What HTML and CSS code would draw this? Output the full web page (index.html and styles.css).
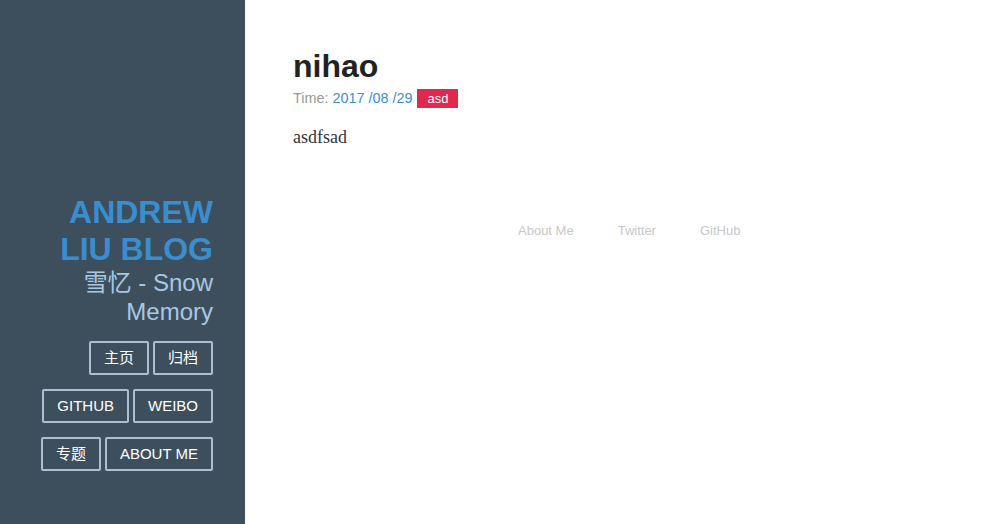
FILE: index.html
```html
<!DOCTYPE html>
<html lang="zh">
<head>
<meta charset="utf-8">
<title>nihao - Andrew Liu Blog</title>
<link rel="stylesheet" href="styles.css">
</head>
<body>
<div class="page">
  <aside class="sidebar">
    <h1 class="site-title">ANDREW LIU BLOG</h1>
    <p class="site-sub">雪忆 - Snow Memory</p>
    <nav class="nav">
      <div class="nav-row"><a class="btn" href="#">主页</a><a class="btn" href="#">归档</a></div>
      <div class="nav-row"><a class="btn" href="#">GITHUB</a><a class="btn" href="#">WEIBO</a></div>
      <div class="nav-row"><a class="btn" href="#">专题</a><a class="btn" href="#">ABOUT ME</a></div>
    </nav>
  </aside>
  <main class="main">
    <article class="post">
      <h2 class="post-title">nihao</h2>
      <div class="meta"><span class="meta-label">Time:</span><span class="meta-date">2017 /08 /29</span><a class="tag" href="#">asd</a></div>
      <p class="post-body">asdfsad</p>
    </article>
    <footer class="footer">
      <a href="#">About Me</a>
      <a href="#">Twitter</a>
      <a href="#">GitHub</a>
    </footer>
  </main>
</div>
</body>
</html>
```

FILE: styles.css
```css
* { box-sizing: border-box; }
html, body { margin: 0; padding: 0; background: #fff; }
body { font-family: "Liberation Sans", Arial, "Noto Sans CJK SC", sans-serif; }
a { text-decoration: none; }

.page { display: flex; min-height: 100vh; }

.sidebar {
  width: 245px;
  flex: 0 0 245px;
  background: #3d4f5d;
  padding: 194px 32px 0 0;
  text-align: right;
  min-height: 524px;
}
.site-title {
  margin: 0;
  font-size: 32px;
  line-height: 37px;
  font-weight: bold;
  color: #3a8ed0;
  padding-left: 40px;
}
.site-sub {
  margin: 0;
  font-size: 24px;
  line-height: 29px;
  color: #a8c8e2;
  padding-left: 80px;
  font-family: "Liberation Sans", Arial, "Noto Sans CJK SC", sans-serif;
}
.nav { margin-top: 15px; display: flex; flex-direction: column; gap: 14px; align-items: flex-end; }
.nav-row { display: flex; gap: 4px; justify-content: flex-end; }
.btn {
  display: block;
  height: 34px;
  line-height: 30px;
  padding: 0 13px;
  border: 2px solid #a9c1d3;
  border-radius: 2px;
  color: #fff;
  font-size: 15px;
  font-family: "Liberation Sans", Arial, "Noto Sans CJK SC", sans-serif;
}

.main { flex: 1; padding: 48px 0 0 48px; }
.post-title {
  margin: 0;
  font-size: 32px;
  line-height: 37px;
  font-weight: bold;
  color: #222;
}
.meta { display: flex; align-items: center; margin-top: 4px; font-size: 14.4px; line-height: 19px; height: 19px; }
.meta-label { color: #999; margin-right: 4px; }
.meta-date { color: #3a8fce; margin-right: 5px; }
.tag {
  display: block;
  flex: 0 0 auto;
  background: #e0294f;
  color: #fff;
  font-size: 13px;
  line-height: 19px;
  height: 19px;
  padding: 0 10px;
}
.post-body {
  margin: 18px 0 0;
  font-family: "Liberation Serif", "Times New Roman", serif;
  font-size: 18px;
  line-height: 22px;
  color: #333;
}
.footer {
  display: flex;
  gap: 44px;
  padding-left: 225px;
  margin-top: 75px;
  font-size: 13px;
  line-height: 16px;
}
.footer a { color: #c8c8c8; }
```
